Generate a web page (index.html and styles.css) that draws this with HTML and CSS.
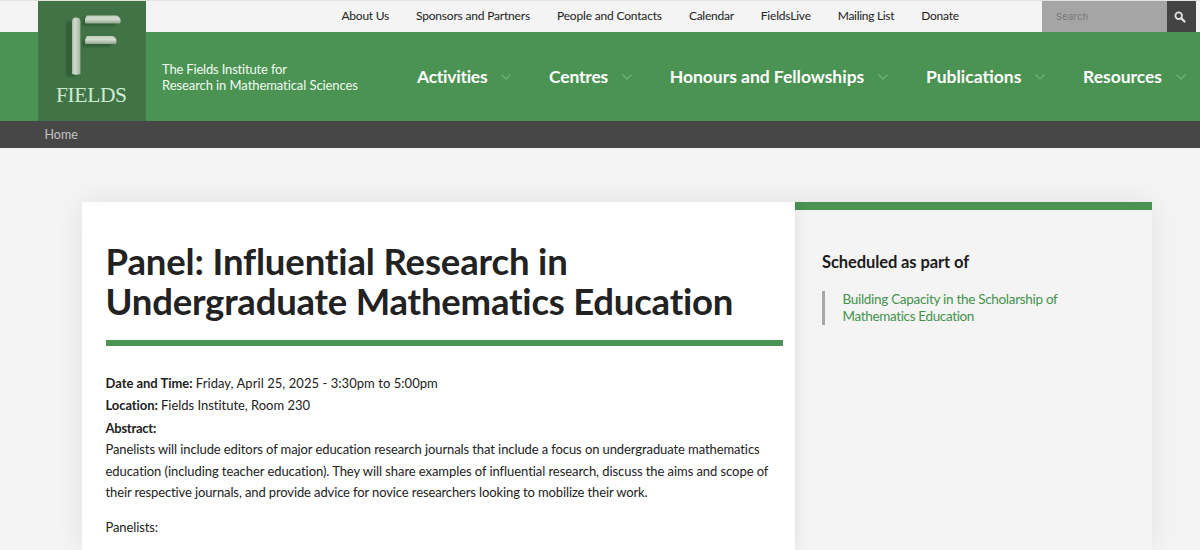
FILE: index.html
```html
<!DOCTYPE html>
<html lang="en">
<head>
<meta charset="utf-8">
<title>Panel: Influential Research in Undergraduate Mathematics Education</title>
<link rel="stylesheet" href="styles.css">
</head>
<body>
<header class="header">
  <a class="logo" href="#">
    <svg width="109" height="120" viewBox="0 0 109 120" aria-label="Fields">
      <defs>
        <linearGradient id="bar-v" x1="0" x2="1" y1="0" y2="0"><stop offset="0" stop-color="#a9b8a5"/><stop offset=".35" stop-color="#d3dccf"/><stop offset="1" stop-color="#a3b39e"/></linearGradient>
        <linearGradient id="bar-h" x1="0" x2="0" y1="0" y2="1"><stop offset="0" stop-color="#c2cebe"/><stop offset=".45" stop-color="#d3dccf"/><stop offset="1" stop-color="#93a68f"/></linearGradient>
        <filter id="soft" x="-30%" y="-30%" width="160%" height="160%"><feGaussianBlur stdDeviation="1.3"/></filter>
      </defs>
      <g fill="#315f39" filter="url(#soft)">
        <rect x="28" y="20" width="9" height="56" rx="2"/>
        <rect x="44" y="18" width="33" height="7" rx="2"/>
        <rect x="44" y="39" width="29" height="7" rx="2"/>
      </g>
      <path fill="url(#bar-v)" d="M34 73V20.500q0-4 4.200-4t4.200 4V73q-4.200 1.500-8.400 0Z"/>
      <path fill="url(#bar-h)" d="M47.500 22.500q-1.500-4 1.500-8h30q5.500 3.500 3 8Z"/>
      <path fill="url(#bar-h)" d="M47.500 43q-1.500-4 1.500-8h26q5.500 3.500 2.500 8Z"/>
      <text class="logo-text" x="18" y="100.500" textLength="71">FIELDS</text>
    </svg>
  </a>
  <div class="header-body">
    <div class="topbar">
      <nav class="top-links">
        <a class="t24" href="#">About Us</a>
        <a class="t19" href="#">Sponsors and Partners</a>
        <a class="t17" href="#">People and Contacts</a>
        <a class="t24" href="#">Calendar</a>
        <a class="t20" href="#">FieldsLive</a>
        <a class="t30" href="#">Mailing List</a>
        <a class="t26" href="#">Donate</a>
      </nav>
      <form class="search">
        <span class="search-field">Search</span>
        <span class="search-button">
          <svg width="12" height="12" viewBox="0 0 12 12"><circle cx="4.700" cy="4.700" r="3.300" fill="none" stroke="#e2e2e2" stroke-width="1.800"/><path d="M7.300 7.300l3.200 3.200" stroke="#e2e2e2" stroke-width="2.300" stroke-linecap="round"/></svg>
        </span>
      </form>
    </div>
    <div class="mainbar">
      <div class="tagline"><div class="t17">The Fields Institute for</div><div class="t08">Research in Mathematical Sciences</div></div>
      <nav class="main-nav">
        <a href="#"><span class="t26">Activities</span><svg class="chev" viewBox="0 0 10 6"><path d="M.5.5 5 5 9.500.5"/></svg></a>
        <a href="#"><span class="t19">Centres</span><svg class="chev" viewBox="0 0 10 6"><path d="M.5.5 5 5 9.500.5"/></svg></a>
        <a href="#"><span class="t03">Honours and Fellowships</span><svg class="chev" viewBox="0 0 10 6"><path d="M.5.5 5 5 9.500.5"/></svg></a>
        <a href="#"><span>Publications</span><svg class="chev" viewBox="0 0 10 6"><path d="M.5.5 5 5 9.500.5"/></svg></a>
        <a href="#"><span class="t03">Resources</span><svg class="chev" viewBox="0 0 10 6"><path d="M.5.5 5 5 9.500.5"/></svg></a>
      </nav>
    </div>
  </div>
</header>
<div class="crumbs">Home</div>
<div class="page">
  <main class="content">
    <h1><span class="title-a">Panel: Influential Research in</span><br><span class="title-b">Undergraduate Mathematics Education</span></h1>
    <div class="field"><b class="t03">Date and Time:</b> <span class="date">Friday, April 25, 2025 - 3:30pm to 5:00pm</span></div>
    <div class="field"><b class="t08">Location:</b> <span class="t03">Fields Institute, Room 230</span></div>
    <div class="field"><b class="t24">Abstract:</b></div>
    <p><span class="t09">Panelists will include editors of major education research journals that include a focus on undergraduate mathematics</span><br><span class="t07">education (including teacher education). They will share examples of influential research, discuss the aims and scope of</span><br><span class="t12">their respective journals, and provide advice for novice researchers looking to mobilize their work.</span></p>
    <p class="t12">Panelists:</p>
  </main>
  <aside class="sidebar">
    <h2>Scheduled as part of</h2>
    <a class="related" href="#"><span class="t30">Building Capacity in the Scholarship of</span><br><span class="t35">Mathematics Education</span></a>
  </aside>
</div>
</body>
</html>
```
FILE: styles.css
```css
* { box-sizing: border-box; }
body { display: flex; flex-direction: column; margin: 0; height: 550px; background: #f4f4f4; color: #222; font-family: Lato, sans-serif; font-size: 13px; }
a { color: inherit; text-decoration: none; }
svg { display: block; }

.header { display: flex; flex: none; height: 121px; padding-left: 37.5px; border-top: 1px solid #e2e2e2; background: linear-gradient(#f4f4f4 31px, #4a9353 31px); }
.logo { width: 108.5px; height: 120px; background: #417347; }
.logo-text { font: 21.5px "Liberation Serif", serif; fill: #cdeccf; }
.header-body { flex: 1; }

.topbar { display: flex; justify-content: space-between; height: 31px; padding: 0 4px 0 195.5px; }
.top-links { display: flex; gap: 27px; font-size: 12px; line-height: 30px; white-space: nowrap; }
.search { display: flex; }
.search-field { width: 125px; padding-left: 14px; background: #a5a5a5; color: #777; font: 9.5px/32px Inter, sans-serif; letter-spacing: .1px; }
.search-button { display: flex; align-items: center; justify-content: center; width: 29px; padding-right: 3px; background: #434343; }

.mainbar { display: flex; height: 89px; padding-left: 16px; color: #fff; white-space: nowrap; }
.tagline { width: 255px; padding-top: 29px; line-height: 16px; color: #f2faf2; }
.main-nav { display: flex; gap: 38.2px; font-size: 17.5px; font-weight: 700; line-height: 24px; padding-top: 33px; }
.main-nav a { display: flex; gap: 13.5px; height: 24px; align-items: center; }
.chev { width: 10px; height: 6px; fill: none; stroke: #70ae77; stroke-width: 1.4; overflow: visible; }

.crumbs { flex: none; height: 27px; padding-left: 44.5px; background: #474747; color: #c4c4c4; font-size: 12.5px; line-height: 28px; }

.page { display: flex; flex: none; width: 1070px; height: 348px; margin: 54px 0 0 82px; box-shadow: 0 0 28px rgba(0, 0, 0, .08); clip-path: inset(-50px -50px 0 -50px); }
.content { position: relative; z-index: 1; width: 713px; padding: 38.5px 12px 0 23.5px; background: #fff; box-shadow: 0 0 14px rgba(0, 0, 0, .1); white-space: nowrap; clip-path: inset(0 -20px 0 0); }
h1 { margin: 0 0 26px; padding-bottom: 19px; border-bottom: 6px solid #4a9353; font-size: 36.5px; line-height: 40.25px; font-weight: 700; }
.title-a { letter-spacing: -.142px; }
.title-b { letter-spacing: -.216px; }
.field { line-height: 22.3px; }
.date { letter-spacing: .05px; }
p { margin: 0 0 13px; line-height: 21.5px; }
.field + p { padding-top: .5px; }

.sidebar { flex: 1; padding: 42px 0 0 27px; border-top: 8px solid #4a9353; background: #f4f4f4; }
h2 { margin: 0 0 18.5px; font-size: 16.5px; line-height: 20px; letter-spacing: -.096px; color: #1b1b1b; }
.related { display: block; padding-left: 17.5px; border-left: 3px solid #a8a8a8; color: #43934d; font-size: 13.5px; line-height: 17px; }

.t03 { letter-spacing: -.028px; }
.t07 { letter-spacing: -.069px; }
.t08 { letter-spacing: -.08px; }
.t09 { letter-spacing: -.094px; }
.t12 { letter-spacing: -.12px; }
.t17 { letter-spacing: -.174px; }
.t19 { letter-spacing: -.187px; }
.t20 { letter-spacing: -.2px; }
.t24 { letter-spacing: -.245px; }
.t26 { letter-spacing: -.26px; }
.t30 { letter-spacing: -.3px; }
.t35 { letter-spacing: -.353px; }
```
